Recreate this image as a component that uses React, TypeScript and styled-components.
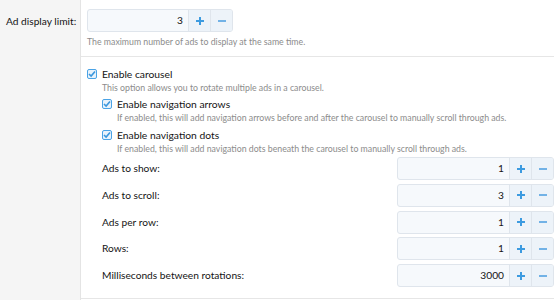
import * as React from 'react'
import styled, { createGlobalStyle } from 'styled-components'

const GlobalStyle = createGlobalStyle`
    html, body {
        margin: 0;
        padding: 0;
        background: #fff;
    }
    body {
        font-family: Lato, 'Open Sans', sans-serif;
        color: #141414;
    }
`

const Page = styled.div`
    width: 560px;
    height: 300px;
    overflow: hidden;
    display: flex;
    flex-direction: column;
`

const FormRow = styled.div<{ grow?: boolean }>`
    display: flex;
    flex: ${({ grow }) => (grow ? '1 1 auto' : '0 0 auto')};
`

const LabelCell = styled.div`
    flex: 0 0 81px;
    min-width: 0;
    background: #f5f5f5;
    border-right: 1px solid #e4e4e4;
    padding: 13px 0 0 6px;
    box-sizing: border-box;
    font-size: 10.2px;
    line-height: 16px;
    white-space: nowrap;
`

const ContentCell = styled.div<{ pt: number; pb: number }>`
    flex: 1 1 auto;
    align-self: flex-start;
    margin-right: 6px;
    padding: ${({ pt, pb }) => `${pt}px 0 ${pb}px 6px`};
    border-bottom: 1px solid #e6e6e6;
`

const Hint = styled.div<{ indent?: number }>`
    font-size: 8.75px;
    line-height: 12px;
    color: #8c8c8c;
    margin-top: ${({ indent }) => (indent ? 0 : 4)}px;
    padding-left: ${({ indent }) => indent || 0}px;
    white-space: nowrap;
`

const SpinBox = styled.div<{ w: number }>`
    display: flex;
    width: ${({ w }) => w}px;
    height: 23px;
    box-sizing: border-box;
    border: 1px solid #dfe5ec;
    border-radius: 3px;
    background: #f6f9fc;
    overflow: hidden;
`

const SpinValue = styled.div`
    flex: 1 1 auto;
    text-align: right;
    padding-right: 5px;
    font-size: 10.2px;
    line-height: 21px;
    color: #141414;
`

const SpinButton = styled.div<{ light?: boolean }>`
    flex: 0 0 21px;
    display: flex;
    align-items: center;
    justify-content: center;
    background: #edf3f9;
    border-left: 1px solid #dfe5ec;
    color: ${({ light }) => (light ? '#72b2e6' : '#3d9be0')};
`

const CheckLine = styled.label`
    display: flex;
    align-items: center;
    gap: 5px;
    font-size: 10.3px;
    line-height: 15px;
`

const CheckGroup = styled.div`
    padding-left: 15px;
    margin-top: 3px;
    display: flex;
    flex-direction: column;
    gap: 4px;
`

const NumberRows = styled.div`
    margin-top: -1.5px;
    display: flex;
    flex-direction: column;
    gap: 3.75px;
`

const NumberRow = styled.div`
    display: flex;
    align-items: center;
    justify-content: space-between;
    font-size: 10.2px;
    line-height: 15px;
`

const Box = styled.span`
    width: 10px;
    height: 10px;
    flex: 0 0 10px;
    box-sizing: border-box;
    border: 1px solid #4aa3e6;
    border-radius: 2px;
    background: #e8f2fb;
    display: inline-flex;
    align-items: center;
    justify-content: center;
`

const Checkbox = () => (
    <Box>
        <svg width="8" height="8" viewBox="0 0 8 8">
            <path d="M1 4 L3.1 6 L7 1.4" fill="none" stroke="#3a97dd" strokeWidth="1.6" />
        </svg>
    </Box>
)

const Spin = ({ value, w }: { value: string; w: number }) => (
    <SpinBox w={w}>
        <SpinValue>{value}</SpinValue>
        <SpinButton>
            <svg width="8" height="8" viewBox="0 0 8 8">
                <path d="M4 0 V8 M0 4 H8" stroke="currentColor" strokeWidth="2" />
            </svg>
        </SpinButton>
        <SpinButton light>
            <svg width="8" height="8" viewBox="0 0 8 8">
                <path d="M0 4 H8" stroke="currentColor" strokeWidth="2" />
            </svg>
        </SpinButton>
    </SpinBox>
)

const carouselOptions = [
    { label: 'Ads to show:', value: '1' },
    { label: 'Ads to scroll:', value: '3' },
    { label: 'Ads per row:', value: '1' },
    { label: 'Rows:', value: '1' },
    { label: 'Milliseconds between rotations:', value: '3000' },
]

export default function App() {
    return (
        <>
            <GlobalStyle />
            <Page>
                <FormRow>
                    <LabelCell>Ad display limit:</LabelCell>
                    <ContentCell pt={9} pb={8}>
                        <Spin value="3" w={146} />
                        <Hint>The maximum number of ads to display at the same time.</Hint>
                    </ContentCell>
                </FormRow>
                <FormRow grow>
                    <LabelCell />
                    <ContentCell pt={9.5} pb={11}>
                        <CheckLine>
                            <Checkbox />
                            Enable carousel
                        </CheckLine>
                        <Hint indent={15}>This option allows you to rotate multiple ads in a carousel.</Hint>
                        <CheckGroup>
                            <div>
                                <CheckLine>
                                    <Checkbox />
                                    Enable navigation arrows
                                </CheckLine>
                                <Hint indent={15}>
                                    If enabled, this will add navigation arrows before and after the carousel to manually scroll through ads.
                                </Hint>
                            </div>
                            <div>
                                <CheckLine>
                                    <Checkbox />
                                    Enable navigation dots
                                </CheckLine>
                                <Hint indent={15}>
                                    If enabled, this will add navigation dots beneath the carousel to manually scroll through ads.
                                </Hint>
                            </div>
                            <NumberRows>
                                {carouselOptions.map(o => (
                                    <NumberRow key={o.label}>
                                        {o.label}
                                        <Spin value={o.value} w={157} />
                                    </NumberRow>
                                ))}
                            </NumberRows>
                        </CheckGroup>
                    </ContentCell>
                </FormRow>
            </Page>
        </>
    )
}
